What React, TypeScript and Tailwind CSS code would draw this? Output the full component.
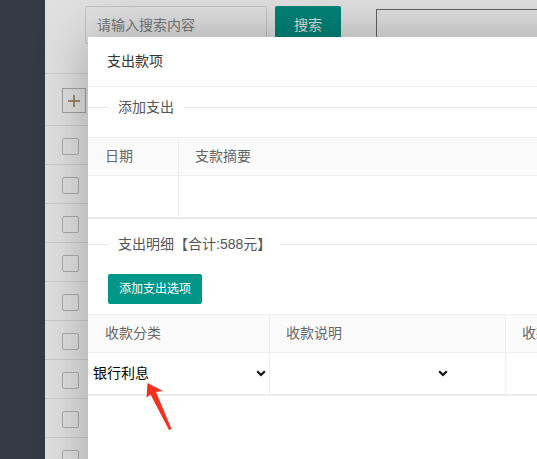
import React from 'react';

const Chevron: React.FC = () => (
  <svg width="10" height="7" viewBox="0 0 10 7" className="shrink-0">
    <path d="M1.2 1.2 L5 5 L8.8 1.2" fill="none" stroke="#111" strokeWidth="2.2" />
  </svg>
);

const Legend: React.FC<{ text: string }> = ({ text }) => (
  <div className="flex items-center h-[20px]">
    <div className="w-[20px] border-t border-[#e6e6e6]" />
    <span className="px-[10px] text-[14px] leading-[20px] text-[#555]">{text}</span>
    <div className="flex-1 border-t border-[#e6e6e6]" />
  </div>
);

const FakeSelect: React.FC<{ value?: string }> = ({ value }) => (
  <div className="w-[181px] h-full flex items-center justify-between pl-[5px] pr-[3px] text-[14px] text-black">
    <span>{value}</span>
    <Chevron />
  </div>
);

const App: React.FC = () => {
  const rows = Array.from({ length: 9 });

  return (
    <div className="relative w-[537px] h-[459px] overflow-hidden bg-white font-['Liberation_Sans','Noto_Sans_CJK_SC',sans-serif]">
      {/* page behind the dialog */}
      <div className="flex h-full">
        <aside className="w-[45px] shrink-0 bg-[#3e4351]" />
        <main className="flex-1 overflow-hidden bg-white">
          <div className="h-[74px] border-b border-[#e8e8e8] flex items-start pt-[6px] pl-[40px]">
            <div className="w-[182px] shrink-0 h-[38px] border border-[#dedede] rounded-[2px] pl-[11px] flex items-center text-[14px] text-[#8a8a8a]">
              请输入搜索内容
            </div>
            <button className="ml-[8px] shrink-0 w-[66px] h-[38px] bg-[#009688] text-white text-[14px] rounded-[2px]">
              搜索
            </button>
            <div className="ml-[35px] mt-[3px] shrink-0 w-[240px] h-[38px] border border-[#707070]" />
          </div>
          <div className="h-[52px] border-b border-[#e8e8e8] pl-[17px] pt-[14px]">
            <div className="w-[24px] h-[25px] border border-[#b8b8b8] flex items-center justify-center">
              <svg width="14" height="14" viewBox="0 0 14 14">
                <path d="M1 7 H13 M7 1 V13" stroke="#9a7a55" strokeWidth="1.4" />
              </svg>
            </div>
          </div>
          {rows.map((_, i) => (
            <div key={i} className="h-[39px] border-b border-[#e8e8e8] pl-[17px] pt-[12px]">
              <div className="w-[17px] h-[17px] border border-[#c4c4c4] rounded-[2px] bg-white" />
            </div>
          ))}
        </main>
      </div>

      {/* shade */}
      <div className="absolute inset-0 bg-black/[0.12]" />

      {/* dialog */}
      <div className="absolute left-[88px] top-[37px] w-[620px] h-[520px] bg-white shadow-[1px_1px_50px_rgba(0,0,0,0.3)] text-[14px]">
        <div className="h-[50px] border-b border-[#eee] pl-[19px] flex items-center text-[#333]">支出款项</div>

        <div className="mt-[10px]">
          <Legend text="添加支出" />
        </div>

        <div className="mt-[20px] border-t border-[#eee] border-b-2 border-b-[#e9e9e9]">
          <div className="flex h-[38px] bg-[#fafafa] border-b border-[#eee] text-[#666]">
            <div className="w-[91px] pl-[17px] flex items-center border-r border-[#eee]">日期</div>
            <div className="flex-1 pl-[16px] flex items-center">支款摘要</div>
          </div>
          <div className="flex h-[41px]">
            <div className="w-[91px] border-r border-[#eee]" />
            <div className="flex-1" />
          </div>
        </div>

        <div className="mt-[15px]">
          <Legend text="支出明细【合计:588元】" />
        </div>

        <button className="mt-[20px] ml-[20px] h-[30px] px-[11px] bg-[#009688] text-white text-[12px] rounded-[2px]">
          添加支出选项
        </button>

        <div className="mt-[10px] border-t border-[#eee] border-b-2 border-b-[#ececec]">
          <div className="flex h-[38px] bg-[#fafafa] border-b border-[#eee] text-[#666]">
            <div className="w-[182px] pl-[17px] flex items-center border-r border-[#eee]">收款分类</div>
            <div className="w-[236px] pl-[16px] flex items-center border-r border-[#eee]">收款说明</div>
            <div className="flex-1 pl-[16px] flex items-center">收款金额</div>
          </div>
          <div className="flex h-[41px]">
            <div className="w-[182px] border-r border-[#eee]">
              <FakeSelect value="银行利息" />
            </div>
            <div className="w-[236px] border-r border-[#eee]">
              <FakeSelect />
            </div>
            <div className="flex-1" />
          </div>
        </div>
      </div>

      {/* annotation arrow */}
      <svg className="absolute left-0 top-0 pointer-events-none" width="537" height="459">
        <polygon
          points="147.5,383 163,391 156,392 171.5,429 169,430 150.5,394.5 146.5,397.5"
          fill="#f5301f"
        />
      </svg>
    </div>
  );
};

export default App;
